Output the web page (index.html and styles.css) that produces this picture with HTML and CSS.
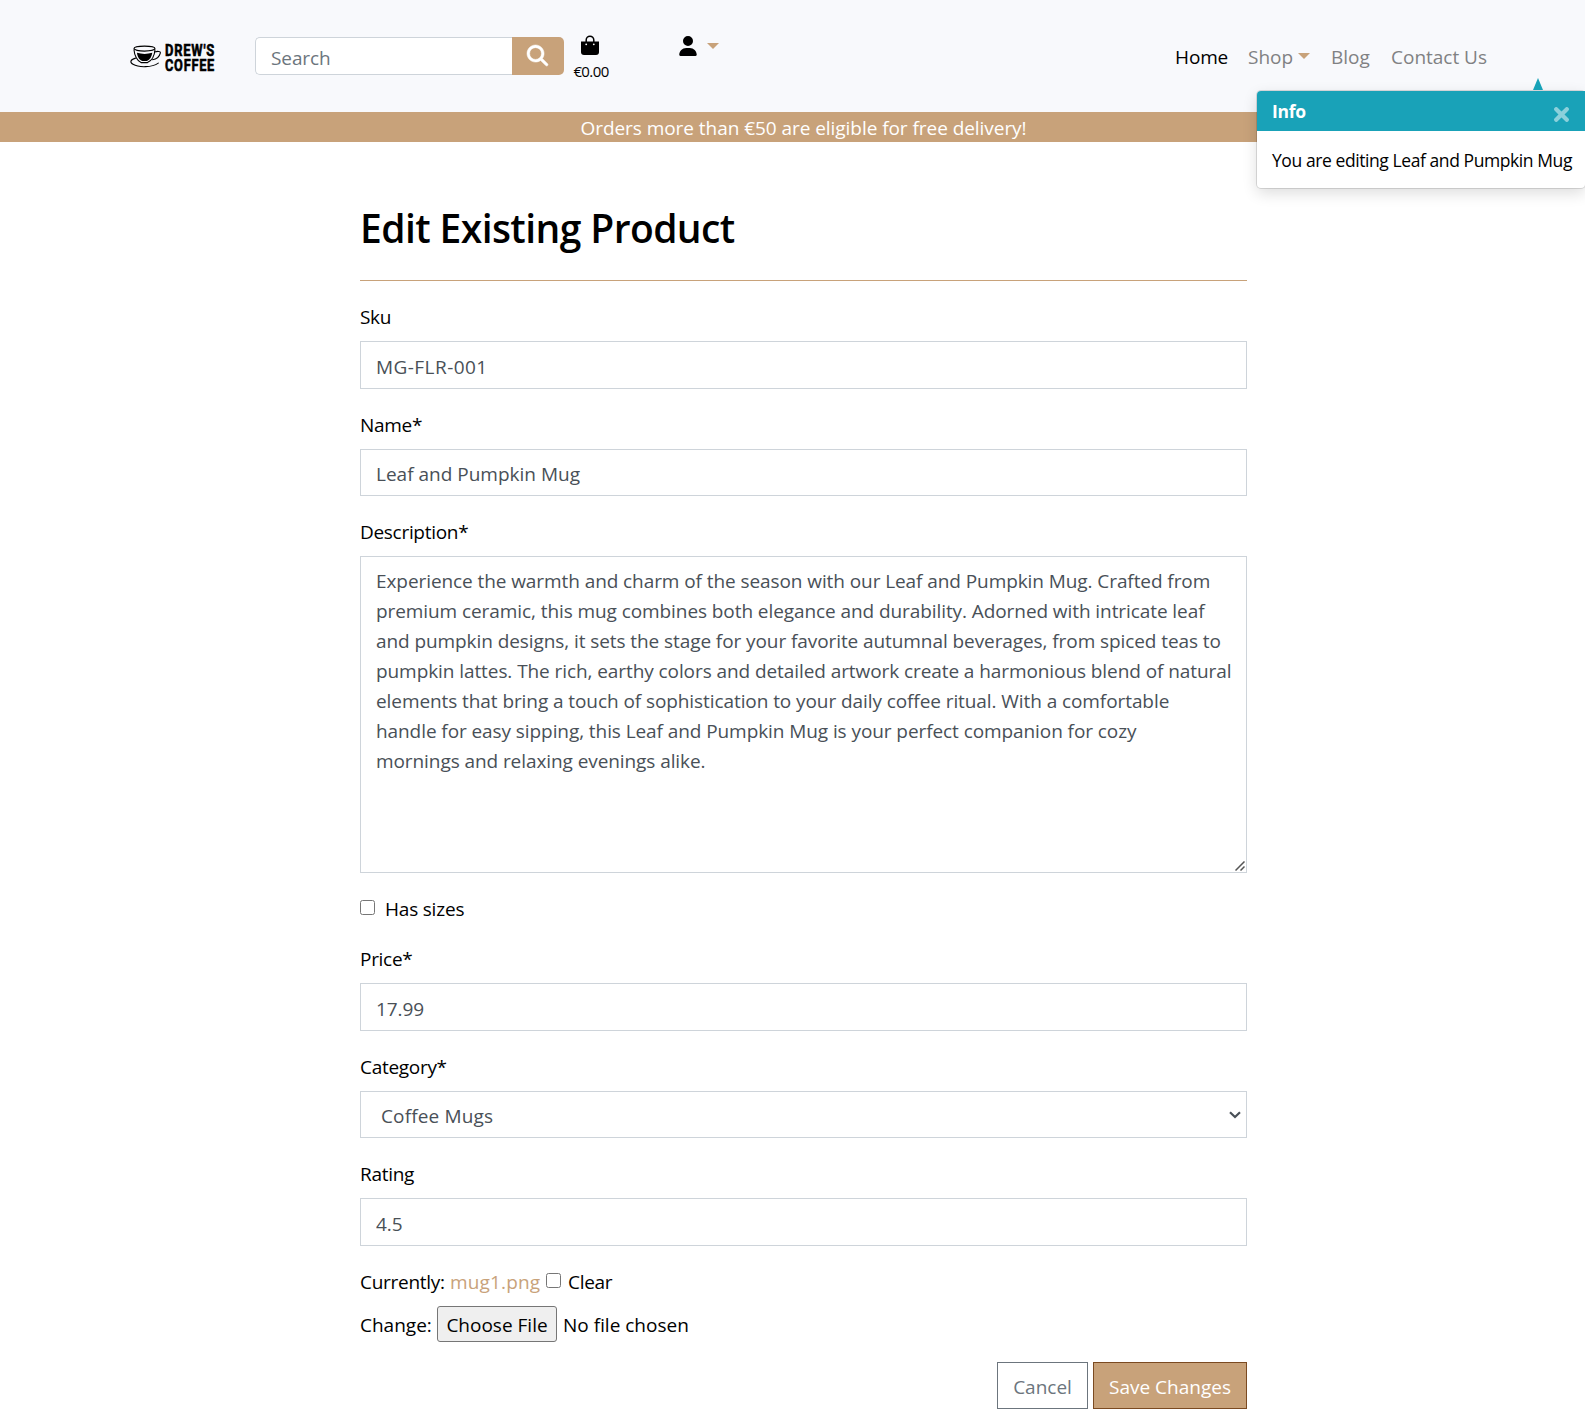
FILE: index.html
```html
<!DOCTYPE html>
<html lang="en">
<head>
<meta charset="utf-8">
<title>Drew's Coffee</title>
<link rel="stylesheet" href="styles.css">
</head>
<body>
<header class="navbar">
  <a class="brand" href="#">
    <svg width="86" height="34" viewBox="0 0 86 34" role="img" aria-label="Drew's Coffee">
      <g transform="translate(0 .8)">
        <g fill="none" stroke="#000" stroke-width="1.1" stroke-linecap="round">
          <ellipse cx="14.500" cy="6.800" rx="10.500" ry="2.500"/>
          <path d="M4 8C4.300 13.500 7.500 19.500 11 20.800H17.500C21.500 19 24.500 14 25 8"/>
          <path d="M24.500 10.300C27 9.300 31 9.200 30.300 11.300C29.500 14.500 26.500 17.500 22.500 18"/>
          <path d="M5.500 16.300C0 18-.3 20.500 3 22.500C9 26 22 25.700 28.300 21.300"/>
        </g>
        <path d="M7 11Q14.500 13.200 22.300 11C21.800 15 19.800 18.200 17 19.200H12.300C9.300 18.200 7.300 15 7 11Z"/>
      </g>
      <text class="brand-text" x="35" y="14.500" textLength="50" lengthAdjust="spacingAndGlyphs">DREW'S</text>
      <text class="brand-text" x="35" y="29.800" textLength="50" lengthAdjust="spacingAndGlyphs">COFFEE</text>
    </svg>
  </a>
  <form class="search">
    <input class="search-input" type="text" placeholder="Search">
    <button class="search-btn" type="button" aria-label="Search">
      <svg width="21" height="21" viewBox="0 0 512 512" fill="#fff" stroke="#fff" stroke-width="12"><path d="M416 208c0 45.900-14.900 88.300-40 122.700L502.600 457.400c12.500 12.500 12.500 32.800 0 45.300s-32.800 12.500-45.300 0L330.700 376c-34.400 25.200-76.800 40-122.700 40C93.100 416 0 322.900 0 208S93.100 0 208 0S416 93.100 416 208zM208 352a144 144 0 1 0 0-288 144 144 0 1 0 0 288z"/></svg>
    </button>
  </form>
  <a class="bag" href="#">
    <svg width="18" height="20" viewBox="0 0 18 20"><path d="M5.200 8V5a3.800 3.800 0 0 1 7.600 0v3" fill="none" stroke="#000" stroke-width="1.500"/><path d="M0 6.500h18v10.500a3 3 0 0 1-3 3H3a3 3 0 0 1-3-3z"/><circle cx="5.200" cy="9.300" r=".9" fill="#fff"/><circle cx="12.800" cy="9.300" r=".9" fill="#fff"/></svg>
    <span class="bag-total">€0.00</span>
  </a>
  <a class="account" href="#">
    <svg width="18" height="20" viewBox="0 0 448 512"><path d="M224 256A128 128 0 1 0 224 0a128 128 0 1 0 0 256zm-45.700 48C79.800 304 0 383.800 0 482.300C0 498.700 13.300 512 29.700 512H418.300c16.400 0 29.700-13.300 29.700-29.700C448 383.800 368.200 304 269.700 304H178.300z"/></svg>
    <span class="caret"></span>
  </a>
  <nav class="links">
    <a class="link active w-home" href="#">Home</a>
    <a class="link w-shop" href="#">Shop<span class="caret"></span></a>
    <a class="link w-blog" href="#">Blog</a>
    <a class="link" href="#">Contact Us</a>
  </nav>
</header>
<div class="banner">Orders more than €50 are eligible for free delivery!</div>

<aside class="toast">
  <span class="toast-arrow"></span>
  <div class="toast-header"><strong>Info</strong>
    <svg width="15" height="15" viewBox="0 0 15 15" stroke="#8cd0db" stroke-width="4.200" stroke-linecap="round"><path d="M2.200 2.200l10.600 10.600M12.800 2.200L2.200 12.800"/></svg>
  </div>
  <div class="toast-body">You are editing Leaf and Pumpkin Mug</div>
</aside>

<main class="page">
  <h1 class="title">Edit Existing Product</h1>
  <form class="form">
    <div class="group"><label class="label" for="sku">Sku</label><input class="field" id="sku" value="MG-FLR-001"></div>
    <div class="group"><label class="label" for="name">Name*</label><input class="field" id="name" value="Leaf and Pumpkin Mug"></div>
    <div class="group"><label class="label" for="desc">Description*</label><textarea class="field area" id="desc">Experience the warmth and charm of the season with our Leaf and Pumpkin Mug. Crafted from
premium ceramic, this mug combines both elegance and durability. Adorned with intricate leaf
and pumpkin designs, it sets the stage for your favorite autumnal beverages, from spiced teas to
pumpkin lattes. The rich, earthy colors and detailed artwork create a harmonious blend of natural
elements that bring a touch of sophistication to your daily coffee ritual. With a comfortable
handle for easy sipping, this Leaf and Pumpkin Mug is your perfect companion for cozy
mornings and relaxing evenings alike.</textarea>
      <svg class="grip" width="10" height="10" viewBox="0 0 10 10" fill="none" stroke="#555" stroke-width="1.500"><path d="M.5 9.500l9-9M5.500 9.500l4-4"/></svg></div>
    <div class="check-row"><input class="check" type="checkbox" id="sizes"><label for="sizes">Has sizes</label></div>
    <div class="group"><label class="label" for="price">Price*</label><input class="field" id="price" value="17.99"></div>
    <div class="group"><label class="label" for="cat">Category*</label><select class="field select" id="cat"><option>Coffee Mugs</option></select>
      <svg class="chevron" width="12" height="8" viewBox="0 0 12 8" fill="none" stroke="#495057" stroke-width="2.200"><path d="M1 1.200l5 4.800 5-4.800"/></svg></div>
    <div class="group"><label class="label" for="rating">Rating</label><input class="field" id="rating" value="4.5"></div>
    <div class="current-row"><span class="w-currently">Currently:</span><a class="file-link" href="#">mug1.png</a><input class="check" type="checkbox" id="clear"><label for="clear">Clear</label></div>
    <div class="file-row"><span class="w-change">Change:</span><button class="file-btn" type="button">Choose File</button><span>No file chosen</span></div>
    <div class="actions"><button class="btn cancel" type="button">Cancel</button><button class="btn save" type="button">Save Changes</button></div>
  </form>
</main>
</body>
</html>
```
FILE: styles.css
```css
* { box-sizing: border-box; }
body {
  margin: 0;
  background: #fff;
  color: #000;
  font: 400 19px/30px "Open Sans", "Noto Sans", sans-serif;
  letter-spacing: -0.1px;
  overflow-x: hidden;
}
input, textarea, select, button { font: inherit; letter-spacing: inherit; margin: 0; }
a { color: inherit; text-decoration: none; }
svg { display: block; flex: none; }

.navbar { display: flex; align-items: flex-start; height: 112px; padding: 0 98px 0 130px; background: #f8f9fc; }
.brand { padding-top: 41px; width: 125px; }
.brand svg { overflow: visible; }
.brand-text { font: 700 17px "Roboto", sans-serif; letter-spacing: 1px; stroke: #000; stroke-width: .6px; }
.search { display: flex; width: 309px; height: 38px; margin-top: 37px; }
.search-input { width: 257px; padding: 3px 15px 0; border: 1px solid #ced4da; border-right: 0; border-radius: 5px 0 0 5px; background: #fff; }
.search-input::placeholder { color: #6c757d; opacity: 1; }
.search-btn { display: flex; justify-content: center; width: 52px; padding: 8px 2px 0 0; border: 0; border-radius: 0 5px 5px 0; background: #c8a27a; }
.search-btn svg { overflow: visible; }
.bag { display: flex; flex-direction: column; align-items: center; width: 36px; margin-left: 8px; padding-top: 35px; }
.bag-total { margin: 6px 0 0 2px; font-size: 15px; line-height: 20px; letter-spacing: -0.6px; }
.account { display: flex; gap: 10px; margin-left: 71px; padding-top: 36px; }
.caret { width: 0; height: 0; border: 6px solid transparent; border-top-color: #c8a27a; border-bottom: 0; }
.account .caret { margin-top: 7px; }
.links { display: flex; margin-left: auto; padding-top: 42px; letter-spacing: -0.02px; }
.link { color: #808183; white-space: nowrap; }
.link.active { color: #000; }
.w-home { width: 73px; letter-spacing: -0.2px; }
.w-shop { display: flex; width: 83px; }
.w-shop .caret { margin: 11px 0 0 5px; }
.w-blog { width: 60px; }

.banner { height: 30px; padding-left: 22px; padding-top: 1px; background: #c8a27a; color: #fff; text-align: center; letter-spacing: -0.05px; }

.toast { position: absolute; top: 91px; right: 0; width: 328px; height: 97px; border-radius: 4px; background: #fff; box-shadow: 0 0 0 1px rgba(0,0,0,.12), 0 5px 15px rgba(0,0,0,.14); letter-spacing: -0.42px; }
.toast-arrow { position: absolute; right: 42px; top: -13px; border: 5px solid transparent; border-bottom: 12px solid #17a2b8; border-top: 0; }
.toast-header { display: flex; justify-content: space-between; height: 40px; padding: 5px 16px 0 15px; border-radius: 4px 0 0 0; background: #19a2b8; color: #fff; font-size: 17.500px; }
.toast-header strong { letter-spacing: -0.3px; }
.toast-header svg { margin-top: 11px; }
.toast-body { padding: 14px 15px; font-size: 17.500px; white-space: nowrap; }

.page { width: 887px; margin-left: 360px; padding-top: 60px; }
.title { height: 78.500px; margin: 0; border-bottom: 1px solid #c8a27a; font-size: 39px; font-weight: 600; line-height: 52px; letter-spacing: -0.58px; }
.form { display: flex; flex-direction: column; padding-top: 20.900px; }
.group { position: relative; margin-bottom: 20px; }
.label { display: block; height: 30px; margin-bottom: 10px; padding-top: 1px; letter-spacing: -0.3px; }
.field { display: block; width: 100%; height: 47.500px; padding: 4px 15px 0; border: 1px solid #ced4da; border-radius: 0; outline: 0; background: #fff; color: #495057; letter-spacing: -0.08px; }
.area { height: 317px; padding: 9px 0 0 15px; overflow: hidden; white-space: pre; resize: none; }
.grip { position: absolute; right: 2px; bottom: 2px; }
.select { padding: 3px 20px 0; appearance: none; letter-spacing: .15px; }
.chevron { position: absolute; right: 6px; bottom: 19px; }
#sku { letter-spacing: .45px; }
#name { padding-top: 3px; letter-spacing: 0; }
.check { width: 15px; height: 15px; }
.check-row { display: flex; gap: 10px; height: 30px; margin-bottom: 20px; padding-top: 1px; letter-spacing: -0.2px; }
.check-row .check, .current-row .check { margin-top: 6px; }
.current-row { display: flex; height: 40px; padding-top: 1px; letter-spacing: -0.28px; }
.w-currently { width: 90px; }
.file-link { width: 96px; color: #c8a27a; letter-spacing: .15px; }
.current-row label { margin-left: 7px; }
.file-row { display: flex; height: 36px; line-height: 38px; letter-spacing: 0; }
.w-change { width: 77px; }
.file-btn { width: 120px; height: 36px; margin-right: 6px; padding: 0; border: 1px solid #767676; border-radius: 3px; background: #efefef; color: #000; line-height: 36px; }
.actions { display: flex; justify-content: flex-end; gap: 5px; margin-top: 20px; letter-spacing: 0; }
.btn { height: 47px; padding: 3px 0 0; border: 1px solid #6c757d; background: #fff; color: #6c757d; }
.cancel { width: 91px; }
.save { width: 154px; border-color: #7b4a21; background: #c8a27a; color: #fff; }
```
